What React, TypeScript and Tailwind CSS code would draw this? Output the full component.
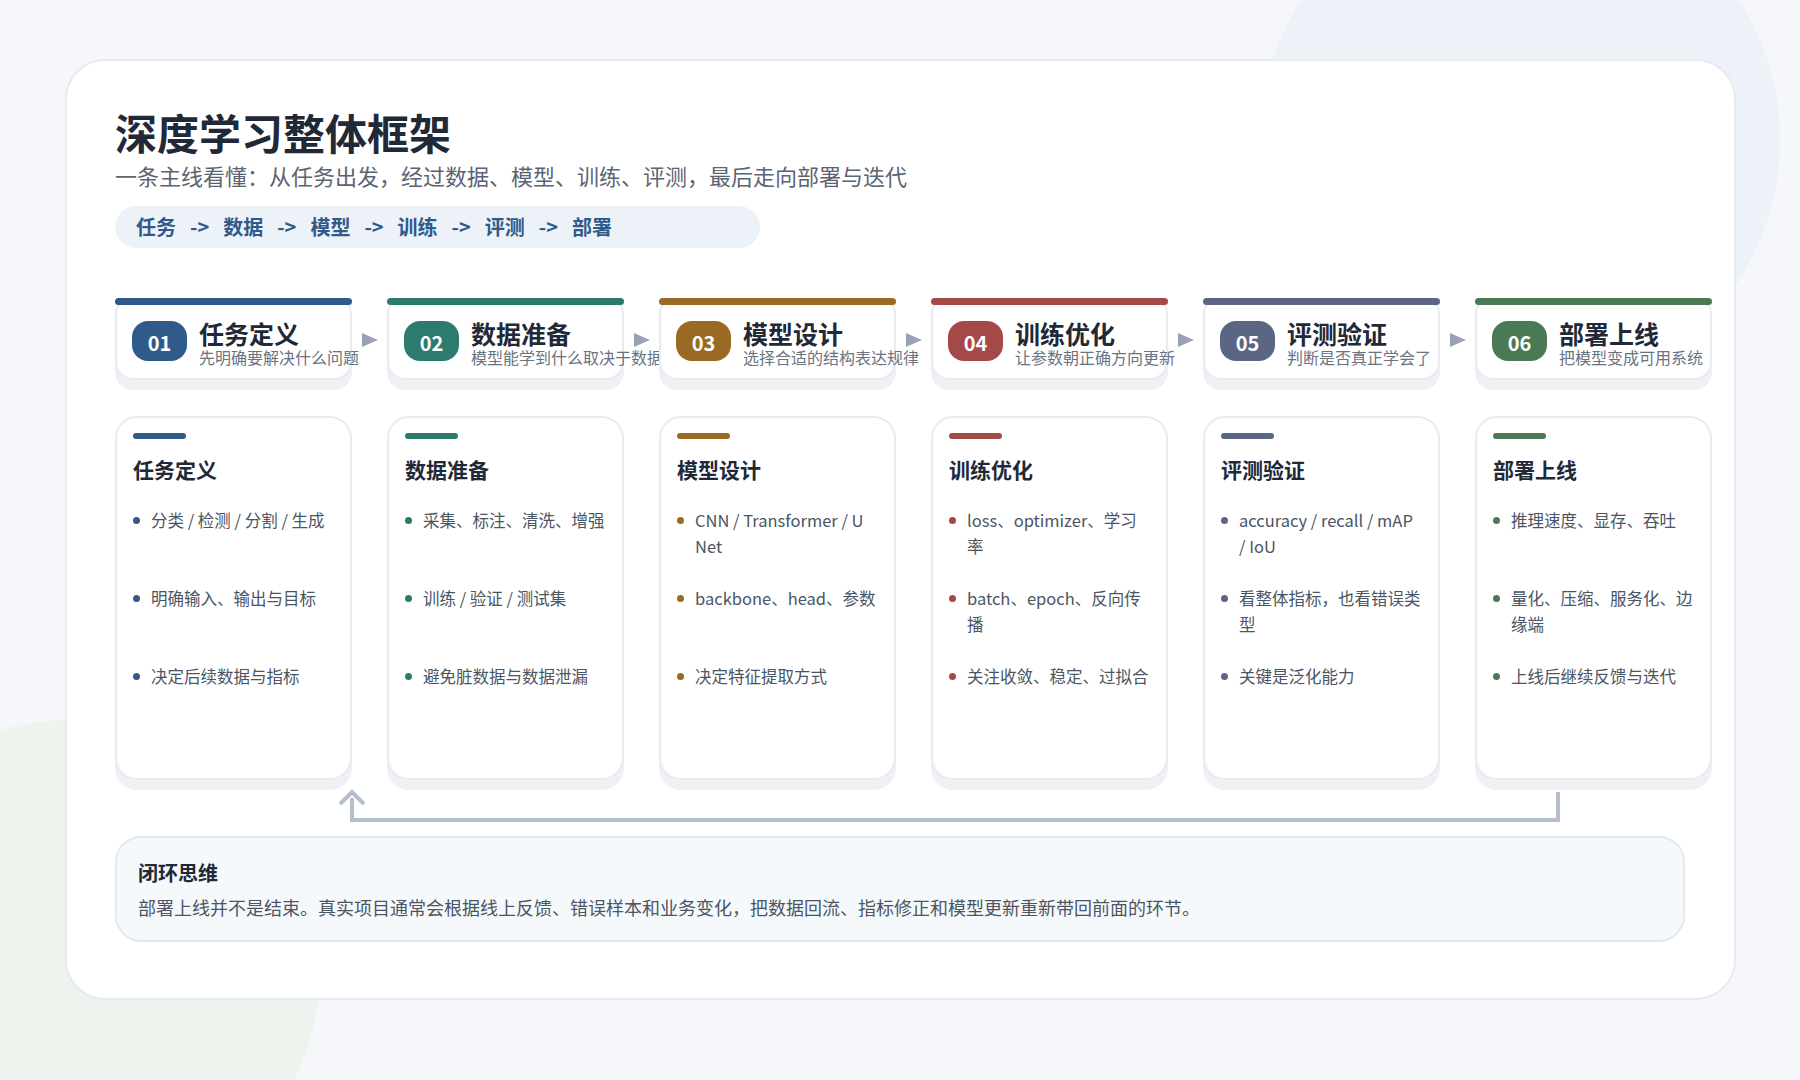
import React from "react";

const stages = [
  { n: "01", t: "任务定义", s: "先明确要解决什么问题", c: "#2f5a8a", items: ["分类 / 检测 / 分割 / 生成", "明确输入、输出与目标", "决定后续数据与指标"] },
  { n: "02", t: "数据准备", s: "模型能学到什么取决于数据", c: "#2d7a6e", items: ["采集、标注、清洗、增强", "训练 / 验证 / 测试集", "避免脏数据与数据泄漏"] },
  { n: "03", t: "模型设计", s: "选择合适的结构表达规律", c: "#9a6a22", items: ["CNN / Transformer / U Net", "backbone、head、参数", "决定特征提取方式"] },
  { n: "04", t: "训练优化", s: "让参数朝正确方向更新", c: "#a54848", items: ["loss、optimizer、学习率", "batch、epoch、反向传播", "关注收敛、稳定、过拟合"] },
  { n: "05", t: "评测验证", s: "判断是否真正学会了", c: "#5a6683", items: ["accuracy / recall / mAP / IoU", "看整体指标，也看错误类型", "关键是泛化能力"] },
  { n: "06", t: "部署上线", s: "把模型变成可用系统", c: "#4a7a55", items: ["推理速度、显存、吞吐", "量化、压缩、服务化、边缘端", "上线后继续反馈与迭代"] },
];

const font = { fontFamily: '"Noto Sans CJK SC", "Noto Sans", sans-serif' };

export default function App() {
  return (
    <div className="relative w-[1800px] h-[1080px] overflow-hidden bg-[#f5f7fa]" style={font}>
      <div className="absolute left-[1260px] top-[-120px] w-[520px] h-[520px] rounded-full bg-[#edf1f8]" />
      <div className="absolute left-[-180px] top-[720px] w-[500px] h-[500px] rounded-full bg-[#eef3ee]" />
      <div className="relative ml-[65px] mt-[59px] w-[1671px] h-[941px] rounded-[40px] bg-white border-2 border-[#e6eaf1] px-[48px] pt-[46px]">
        <div className="text-[42px] font-bold leading-[1.2] text-[#1f2937]">深度学习整体框架</div>
        <div className="mt-[4px] text-[22px] leading-[1.3] text-[#5b6472]">一条主线看懂：从任务出发，经过数据、模型、训练、评测，最后走向部署与迭代</div>
        <div className="mt-[16px] w-[645px] h-[42px] rounded-full bg-[#edf2f9] flex items-center pl-[21px] text-[20px] font-bold text-[#2f5a8a] gap-[14px]">
          {["任务", "数据", "模型", "训练", "评测", "部署"].map((w, i) => (
            <React.Fragment key={w}>
              {i > 0 && <span>-&gt;</span>}
              <span>{w}</span>
            </React.Fragment>
          ))}
        </div>

        <div className="mt-[50px] flex gap-[35px]">
          {stages.map((st, i) => (
            <div key={st.n} className="relative w-[237px] shrink-0">
              <div className="h-[7px] rounded-full relative z-10" style={{ background: st.c }} />
              <div className="-mt-[3px] h-[78px] rounded-b-[18px] rounded-t-[10px] bg-white border-2 border-[#e8ecf2] shadow-[0_10px_0_#eef0f4] flex items-center pl-[15px] gap-[12px]">
                <div className="w-[55px] h-[40px] rounded-[16px] flex items-center justify-center text-white font-bold text-[20px] pt-[4px] shrink-0" style={{ background: st.c }}>{st.n}</div>
                <div className="whitespace-nowrap pt-[4px]">
                  <div className="text-[25px] font-bold leading-[28px] text-[#1f2937]">{st.t}</div>
                  <div className="text-[16px] leading-[20px] text-[#6b7280]">{st.s}</div>
                </div>
              </div>
              {i < 5 && (
                <svg className="absolute left-[247px] top-[35px]" width="16" height="14" viewBox="0 0 16 14">
                  <path d="M0 0 L16 7 L0 14 Z" fill="#9aa3b5" />
                </svg>
              )}
            </div>
          ))}
        </div>

        <div className="mt-[36px] flex gap-[35px]">
          {stages.map((st) => (
            <div key={st.n} className="relative z-10 w-[237px] h-[364px] shrink-0 rounded-[22px] bg-white border-2 border-[#e8ecf2] shadow-[0_10px_0_#eef0f4] px-[16px] pt-[15px]">
              <div className="w-[53px] h-[6px] rounded-full" style={{ background: st.c }} />
              <div className="mt-[17px] text-[21px] font-bold text-[#1f2937] leading-[1.3]">{st.t}</div>
              <div className="mt-[24px]">
                {st.items.map((it) => (
                  <div key={it} className="h-[78px] flex gap-[11px] text-[16.5px] leading-[26px] text-[#4b5563]">
                    <span className="mt-[10px] w-[7px] h-[7px] rounded-full shrink-0" style={{ background: st.c }} />
                    <span>{it}</span>
                  </div>
                ))}
              </div>
            </div>
          ))}
        </div>

        <div className="relative h-[56px]">
          <svg className="absolute left-0 top-0" width="1600" height="56" viewBox="0 0 1600 56">
            <path d="M1443 12 V40 H237 V18" fill="none" stroke="#b5bfcb" strokeWidth="4" />
            <path d="M225 24 L237 12 L249 24" fill="none" stroke="#b5bfcb" strokeWidth="4" />
          </svg>
        </div>

        <div className="w-[1570px] h-[106px] rounded-[26px] bg-[#f6f9fc] border-2 border-[#e3e9f1] px-[21px] pt-[22px]">
          <div className="text-[20px] font-bold text-[#1f2937] leading-[1.3]">闭环思维</div>
          <div className="mt-[10px] text-[18px] text-[#4b5563] leading-[1.3]">部署上线并不是结束。真实项目通常会根据线上反馈、错误样本和业务变化，把数据回流、指标修正和模型更新重新带回前面的环节。</div>
        </div>
      </div>
    </div>
  );
}
